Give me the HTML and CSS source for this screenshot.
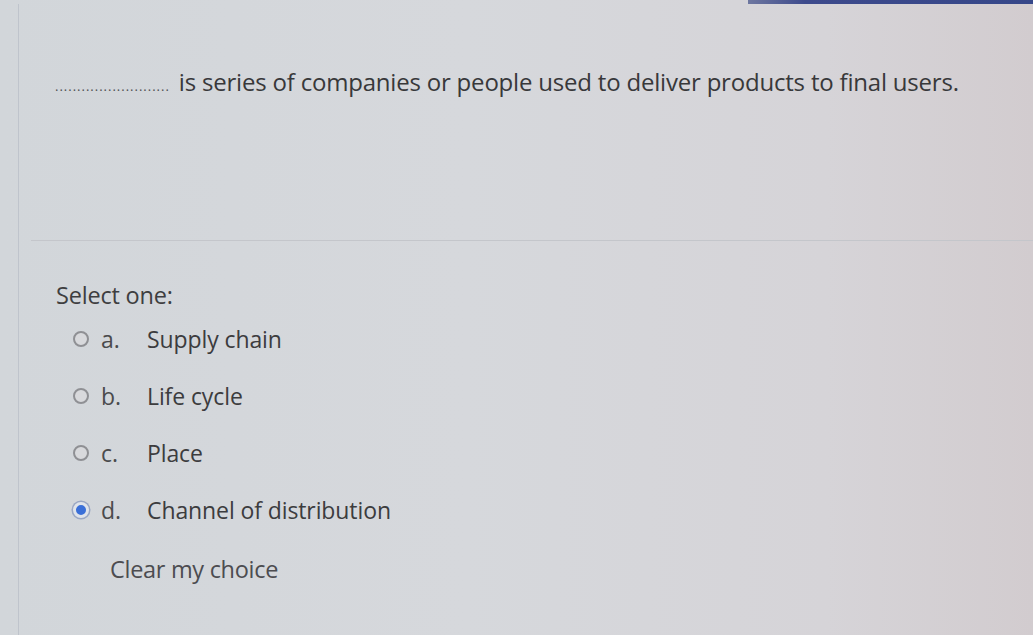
FILE: index.html
```html
<!DOCTYPE html>
<html>
<head>
<meta charset="utf-8">
<link rel="stylesheet" href="styles.css">
</head>
<body>
<div class="screen">
  <div class="topbar"><div class="topbar-fill"></div></div>
  <div class="card">
    <div class="qtext"><span class="blank">..........................</span> is series of companies or people used to deliver products to final users.</div>
    <div class="divider"></div>
    <div class="answer">
      <div class="prompt">Select one:</div>
      <div class="options">
        <label class="opt"><span class="radio"></span><span class="letter">a.</span><span class="label">Supply chain</span></label>
        <label class="opt"><span class="radio"></span><span class="letter">b.</span><span class="label">Life cycle</span></label>
        <label class="opt"><span class="radio"></span><span class="letter">c.</span><span class="label">Place</span></label>
        <label class="opt"><span class="radio checked"></span><span class="letter">d.</span><span class="label">Channel of distribution</span></label>
      </div>
      <div class="clear">Clear my choice</div>
    </div>
  </div>
</div>
</body>
</html>
```
FILE: styles.css
```css
html, body {
  margin: 0;
  padding: 0;
}
body {
  width: 1033px;
  height: 635px;
  overflow: hidden;
  font-family: "Open Sans", "Noto Sans", sans-serif;
  background: linear-gradient(90deg, #d2d6da 0%, #d6d8dc 45%, #d6d4d8 80%, #d2cccf 100%);
  color: #3b3b3d;
}
.screen {
  height: 635px;
  display: flex;
  flex-direction: column;
}
.topbar {
  height: 4px;
  display: flex;
  justify-content: flex-end;
}
.topbar-fill {
  width: 285px;
  height: 4px;
  background: linear-gradient(90deg, #6e77a0 0%, #3d4a8c 20%, #364789 100%);
}
.card {
  flex: 1;
  margin-left: 18px;
  border-left: 1px solid #bfc4cc;
}
.qtext {
  margin: 62px 0 0 36px;
  font-size: 24px;
  line-height: 32px;
  color: #38383a;
  letter-spacing: -0.2px;
}
.blank {
  font-size: 13px;
  letter-spacing: 1px;
  color: #505054;
  margin-right: 3px;
}
.divider {
  margin: 138px 0 0 12px;
  height: 1px;
  background: #c4c6cb;
}
.answer {
  padding: 38px 0 0 37px;
}
.prompt {
  font-size: 23.5px;
  line-height: 32px;
  color: #3e3e40;
  letter-spacing: -0.2px;
}
.options {
  display: flex;
  flex-direction: column;
  gap: 25px;
  margin-top: 12px;
  padding-left: 17px;
}
.opt {
  display: flex;
  align-items: center;
  height: 32px;
  font-size: 23px;
  color: #3e3e40;
  letter-spacing: -0.1px;
}
.radio {
  width: 16px;
  height: 16px;
  border: 2px solid #8f9094;
  border-radius: 50%;
  box-sizing: border-box;
  background: #d8d9dc;
  margin-right: 12px;
  flex: none;
}
.radio.checked {
  background: #3a6fd8;
  border: 3px solid #dfe3ea;
  box-shadow: 0 0 0 1.5px #9aa7c4;
}
.letter {
  width: 46px;
  color: #4a4a4c;
}
.label {
  color: #3c3c3e;
}
.clear {
  margin: 27px 0 0 54px;
  font-size: 23.5px;
  line-height: 32px;
  color: #4c4c50;
  letter-spacing: -0.3px;
}
```
